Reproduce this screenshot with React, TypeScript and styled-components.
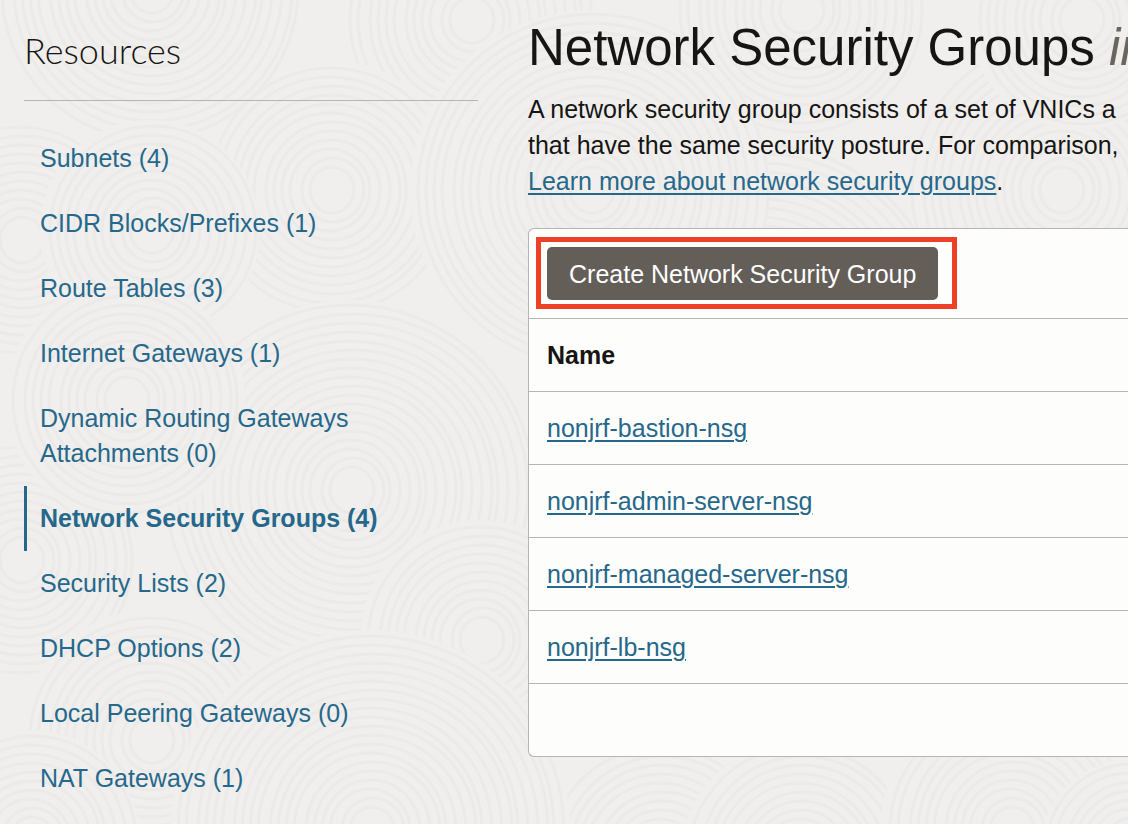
import React from "react";
import styled, { createGlobalStyle } from "styled-components";

const ink = "#161513";
const accent = "#26688b";
const line = "#b9b4b1";
const paper = "#f0efed";
const groove = "#ebeae8";

/* Carved ring clusters; later clusters cover the earlier ones. */
const clusters: [number, number, number][] = [
  [760, 330, 190], [470, 20, 130], [20, 240, 120], [330, 190, 130],
  [1060, 190, 150], [800, 10, 130], [1080, 20, 110], [150, -10, 150],
  [590, 190, 180], [150, 230, 110], [350, 490, 190], [20, 560, 120],
  [125, 400, 120], [480, 640, 120], [150, 740, 130], [30, 840, 110],
  [660, 860, 120], [370, 830, 200], [800, 860, 120], [1010, 830, 130],
  [1130, 850, 90],
];

const rings = clusters
  .map(([x, y, max]) => {
    let out = `<circle cx="${x}" cy="${y}" r="${max}" fill="${paper}" stroke="none"/>`;
    for (let r = 22; r < max; r += 9) {
      out += `<ellipse cx="${x + (r % 4)}" cy="${y}" rx="${r}" ry="${r + (r % 3)}"/>`;
    }
    return out;
  })
  .join("");

const texture = encodeURIComponent(
  `<svg xmlns="http://www.w3.org/2000/svg" width="1128" height="824" fill="none" stroke="${groove}" stroke-width="3">${rings}</svg>`
);

const GlobalStyle = createGlobalStyle`
  *, *::before, *::after { box-sizing: border-box; }
  body {
    margin: 0;
    background: ${paper} url("data:image/svg+xml,${texture}");
    color: ${ink};
    font: 400 25px/36px "Helvetica Neue", "Liberation Sans", Arial, sans-serif;
  }
`;

const Page = styled.div`
  display: grid;
  grid-template-columns: 454px minmax(0, 1fr);
  column-gap: 50px;
  min-height: 100vh;
  padding-left: 24px;
  overflow: hidden;
`;

const Sidebar = styled.nav``;

const SidebarTitle = styled.h2`
  margin: 0 0 25px;
  padding: 26px 0;
  border-bottom: 1px solid ${line};
  font: 300 36px/48px Lato, sans-serif;
`;

const NavList = styled.ul`
  margin: 0;
  padding: 0;
  list-style: none;
`;

const NavLink = styled.a<{ $active?: boolean }>`
  display: block;
  padding: 15px 90px 15px 13px;
  border-left: 3px solid ${(p) => (p.$active ? accent : "transparent")};
  color: ${accent};
  font-weight: ${(p) => (p.$active ? 700 : 400)};
  line-height: 35px;
  text-decoration: none;
`;

const Main = styled.main`
  padding-bottom: 67px;
  white-space: nowrap;
`;

const Title = styled.h1`
  margin: 0;
  padding: 16px 0 11px;
  font-size: 51px;
  font-weight: 400;
  line-height: 64px;
`;

const Scope = styled.em`
  color: #6b6560;
`;

const Intro = styled.p`
  margin: 0 0 29px;
`;

const TextLink = styled.a`
  color: ${accent};
  text-decoration: underline;
  text-decoration-thickness: 2px;
  text-underline-offset: 3px;
`;

const Panel = styled.section`
  border: 1px solid ${line};
  border-right: 0;
  border-radius: 6px 0 0 6px;
  background: #fdfdfb;
`;

const Toolbar = styled.div`
  display: flex;
  padding: 8px 7px 9px;
`;

const Highlight = styled.div`
  display: flex;
  padding: 5px 14px 4px 6px;
  border: 5px solid #ee4026;
`;

const Button = styled.button`
  height: 53px;
  padding: 0 22px;
  border: 0;
  border-radius: 5px;
  background: #645e59;
  color: #fff;
  font: inherit;
`;

const Table = styled.table`
  width: 100%;
  border-collapse: separate;
  border-spacing: 0;
`;

const cell = `
  height: 73px;
  padding: 0 18px;
  border-top: 1px solid ${line};
  text-align: left;
`;

const HeadCell = styled.th`
  ${cell}
`;

const Cell = styled.td`
  ${cell}
`;

const resources = [
  "Subnets (4)",
  "CIDR Blocks/Prefixes (1)",
  "Route Tables (3)",
  "Internet Gateways (1)",
  "Dynamic Routing Gateways Attachments (0)",
  "Network Security Groups (4)",
  "Security Lists (2)",
  "DHCP Options (2)",
  "Local Peering Gateways (0)",
  "NAT Gateways (1)",
];

const groups = [
  "nonjrf-bastion-nsg",
  "nonjrf-admin-server-nsg",
  "nonjrf-managed-server-nsg",
  "nonjrf-lb-nsg",
];

export default function App() {
  return (
    <>
      <GlobalStyle />
      <Page>
        <Sidebar aria-label="Resources">
          <SidebarTitle>Resources</SidebarTitle>
          <NavList>
            {resources.map((name) => (
              <li key={name}>
                <NavLink href="#" $active={name.startsWith("Network")}>
                  {name}
                </NavLink>
              </li>
            ))}
          </NavList>
        </Sidebar>
        <Main>
          <Title>
            Network Security Groups <Scope>in</Scope>
          </Title>
          <Intro>
            A network security group consists of a set of VNICs a
            <br />
            that have the same security posture. For comparison,
            <br />
            <TextLink href="#">Learn more about network security groups</TextLink>.
          </Intro>
          <Panel>
            <Toolbar>
              <Highlight>
                <Button type="button">Create Network Security Group</Button>
              </Highlight>
            </Toolbar>
            <Table>
              <thead>
                <tr>
                  <HeadCell scope="col">Name</HeadCell>
                </tr>
              </thead>
              <tbody>
                {groups.map((name) => (
                  <tr key={name}>
                    <Cell>
                      <TextLink href="#">{name}</TextLink>
                    </Cell>
                  </tr>
                ))}
              </tbody>
              <tfoot>
                <tr>
                  <Cell />
                </tr>
              </tfoot>
            </Table>
          </Panel>
        </Main>
      </Page>
    </>
  );
}
